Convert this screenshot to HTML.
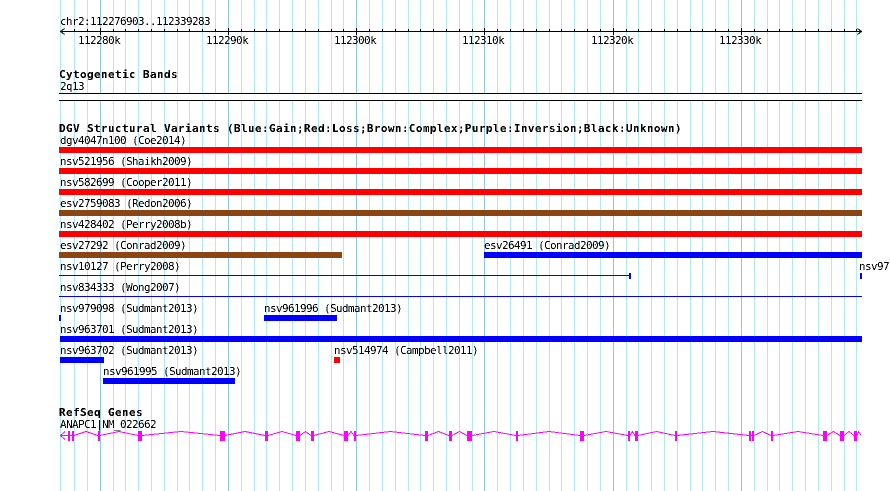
<!DOCTYPE html>
<html><head><meta charset="utf-8"><style>
html,body{margin:0;padding:0;background:#fff;width:890px;height:491px;overflow:hidden}
svg{display:block}
text{font-family:"DejaVu Sans Mono","Liberation Mono",monospace;font-size:11px;letter-spacing:-0.62px;fill:#000;white-space:pre}
text.b{font-weight:bold;font-size:11px;letter-spacing:0.376px}
</style></head><body>
<svg width="890" height="491" viewBox="0 0 890 491" xmlns="http://www.w3.org/2000/svg">
<defs><filter id="t" x="0" y="0" width="890" height="491" filterUnits="userSpaceOnUse" primitiveUnits="userSpaceOnUse" color-interpolation-filters="sRGB"><feComponentTransfer><feFuncA type="discrete" tableValues="0 0 1 1"/></feComponentTransfer></filter></defs>
<g shape-rendering="crispEdges" fill="none">
<path stroke="#aeeaee" d="M60.5 0V491M74.5 0V491M87.5 0V491M113.5 0V491M125.5 0V491M138.5 0V491M151.5 0V491M164.5 0V491M177.5 0V491M189.5 0V491M202.5 0V491M215.5 0V491M241.5 0V491M254.5 0V491M266.5 0V491M279.5 0V491M292.5 0V491M305.5 0V491M318.5 0V491M331.5 0V491M343.5 0V491M369.5 0V491M382.5 0V491M395.5 0V491M408.5 0V491M420.5 0V491M433.5 0V491M446.5 0V491M459.5 0V491M472.5 0V491M497.5 0V491M510.5 0V491M523.5 0V491M536.5 0V491M549.5 0V491M561.5 0V491M574.5 0V491M587.5 0V491M600.5 0V491M626.5 0V491M638.5 0V491M651.5 0V491M664.5 0V491M677.5 0V491M690.5 0V491M702.5 0V491M715.5 0V491M728.5 0V491M754.5 0V491M767.5 0V491M779.5 0V491M792.5 0V491M805.5 0V491M818.5 0V491M831.5 0V491M844.5 0V491M856.5 0V491"/>
<path stroke="#8cc8ee" d="M100.5 0V491M228.5 0V491M356.5 0V491M484.5 0V491M613.5 0V491M741.5 0V491"/>
<rect x="59" y="94" width="803" height="6" fill="#fff"/>
<rect x="59" y="93" width="803" height="1" fill="#000"/>
<rect x="59" y="100" width="803" height="1" fill="#000"/>
<!-- ruler -->
<rect x="60" y="31" width="802" height="1" fill="#000"/>
<path stroke="#000" d="M74.5 29V32M87.5 29V32M113.5 29V32M125.5 29V32M138.5 29V32M151.5 29V32M164.5 29V32M177.5 29V32M189.5 29V32M202.5 29V32M215.5 29V32M241.5 29V32M254.5 29V32M266.5 29V32M279.5 29V32M292.5 29V32M305.5 29V32M318.5 29V32M331.5 29V32M343.5 29V32M369.5 29V32M382.5 29V32M395.5 29V32M408.5 29V32M420.5 29V32M433.5 29V32M446.5 29V32M459.5 29V32M472.5 29V32M497.5 29V32M510.5 29V32M523.5 29V32M536.5 29V32M549.5 29V32M561.5 29V32M574.5 29V32M587.5 29V32M600.5 29V32M626.5 29V32M638.5 29V32M651.5 29V32M664.5 29V32M677.5 29V32M690.5 29V32M702.5 29V32M715.5 29V32M728.5 29V32M754.5 29V32M767.5 29V32M779.5 29V32M792.5 29V32M805.5 29V32M818.5 29V32M831.5 29V32M844.5 29V32M856.5 29V32"/>
<path stroke="#000" d="M100.5 28V35M228.5 28V35M356.5 28V35M484.5 28V35M613.5 28V35M741.5 28V35"/>
<polyline stroke="#000" points="64.5,28.5 60.5,31.5 64.5,34.5"/>
<polyline stroke="#000" points="857.5,28.5 861.5,31.5 857.5,34.5"/>
<!-- bars -->
<rect x="59" y="147" width="803" height="6" fill="#f00"/>
<rect x="59" y="168" width="803" height="6" fill="#f00"/>
<rect x="59" y="189" width="803" height="6" fill="#f00"/>
<rect x="59" y="210" width="803" height="6" fill="#8b4513"/>
<rect x="59" y="231" width="803" height="6" fill="#f00"/>
<rect x="59" y="252" width="283" height="6" fill="#8b4513"/>
<rect x="484" y="252" width="378" height="6" fill="#00f"/>
<rect x="59" y="275" width="571" height="1" fill="#00f"/>
<rect x="629" y="273" width="2" height="6" fill="#00f"/>
<rect x="860" y="273" width="2" height="6" fill="#00f"/>
<rect x="59" y="296" width="803" height="1" fill="#00f"/>
<rect x="59" y="315" width="2" height="6" fill="#00f"/>
<rect x="264" y="315" width="73" height="6" fill="#00f"/>
<rect x="60" y="336" width="802" height="6" fill="#00f"/>
<rect x="60" y="357" width="44" height="6" fill="#00f"/>
<rect x="334" y="357" width="6" height="6" fill="#f00"/>
<rect x="103" y="378" width="132" height="6" fill="#00f"/>
<!-- gene -->
<polyline stroke="#f0f" points="60.5,435.5 74,435.5 86,431.5 98,435.5 100,435.5 119,431.5 138,435.5 142,435.5 181,431.5 220,435.5 225,435.5 245,431.5 265,435.5 268,435.5 282,431.5 296,435.5 300,435.5 305.5,431.5 311,435.5 314,435.5 329,431.5 344,435.5 348,435.5 351,431.5 354,435.5 356,435.5 390.5,431.5 425,435.5 428,435.5 438.5,431.5 449,435.5 452,435.5 459.5,431.5 467,435.5 472,435.5 494,431.5 516,435.5 518,435.5 549,431.5 580,435.5 584,435.5 606,431.5 628,435.5 630,435.5 632.5,431.5 635,435.5 638,435.5 656.5,431.5 675,435.5 677,435.5 713,431.5 749,435.5 754,435.5 762.5,431.5 771,435.5 773,435.5 798,431.5 823,435.5 827,435.5 833.5,431.5 840,435.5 844,435.5 849,431.5 854,435.5 857,435.5 858.5,431.5 861,435.5"/>
<polyline stroke="#f0f" points="65,431.5 60.5,435.5 65,439.5"/>
<g fill="#f0f"><rect x="68" y="431" width="2" height="10"/><rect x="72" y="431" width="2" height="10"/><rect x="98" y="431" width="2" height="10"/><rect x="138" y="431" width="4" height="10"/><rect x="220" y="431" width="5" height="10"/><rect x="265" y="431" width="3" height="10"/><rect x="296" y="431" width="4" height="10"/><rect x="311" y="431" width="3" height="10"/><rect x="344" y="431" width="4" height="10"/><rect x="354" y="431" width="2" height="10"/><rect x="425" y="431" width="3" height="10"/><rect x="449" y="431" width="3" height="10"/><rect x="467" y="431" width="5" height="10"/><rect x="516" y="431" width="2" height="10"/><rect x="580" y="431" width="4" height="10"/><rect x="628" y="431" width="2" height="10"/><rect x="635" y="431" width="3" height="10"/><rect x="675" y="431" width="2" height="10"/><rect x="749" y="431" width="2" height="10"/><rect x="752" y="431" width="2" height="10"/><rect x="771" y="431" width="2" height="10"/><rect x="823" y="431" width="4" height="10"/><rect x="840" y="431" width="4" height="10"/><rect x="854" y="431" width="3" height="10"/></g>
</g>
<g filter="url(#t)">
<text x="60" y="25">chr2:112276903..112339283</text>
<text x="78" y="44">112280k</text>
<text x="206" y="44">112290k</text>
<text x="334" y="44">112300k</text>
<text x="462" y="44">112310k</text>
<text x="591" y="44">112320k</text>
<text x="719" y="44">112330k</text>
<text class="b" x="59" y="78">Cytogenetic Bands</text>
<text x="60" y="90">2q13</text>
<text class="b" x="59" y="132">DGV Structural Variants (Blue:Gain;Red:Loss;Brown:Complex;Purple:Inversion;Black:Unknown)</text>
<text x="60" y="144">dgv4047n100 (Coe2014)</text>
<text x="60" y="165">nsv521956 (Shaikh2009)</text>
<text x="60" y="186">nsv582699 (Cooper2011)</text>
<text x="60" y="207">esv2759083 (Redon2006)</text>
<text x="60" y="228">nsv428402 (Perry2008b)</text>
<text x="60" y="249">esv27292 (Conrad2009)</text>
<text x="484" y="249">esv26491 (Conrad2009)</text>
<text x="60" y="270">nsv10127 (Perry2008)</text>
<text x="859" y="270">nsv97</text>
<text x="60" y="291">nsv834333 (Wong2007)</text>
<text x="60" y="312">nsv979098 (Sudmant2013)</text>
<text x="264" y="312">nsv961996 (Sudmant2013)</text>
<text x="60" y="333">nsv963701 (Sudmant2013)</text>
<text x="60" y="354">nsv963702 (Sudmant2013)</text>
<text x="334" y="354">nsv514974 (Campbell2011)</text>
<text x="103" y="375">nsv961995 (Sudmant2013)</text>
<text class="b" x="59" y="416">RefSeq Genes</text>
<text x="60" y="428">ANAPC1|NM_022662</text>
</g>
</svg>
</body></html>
